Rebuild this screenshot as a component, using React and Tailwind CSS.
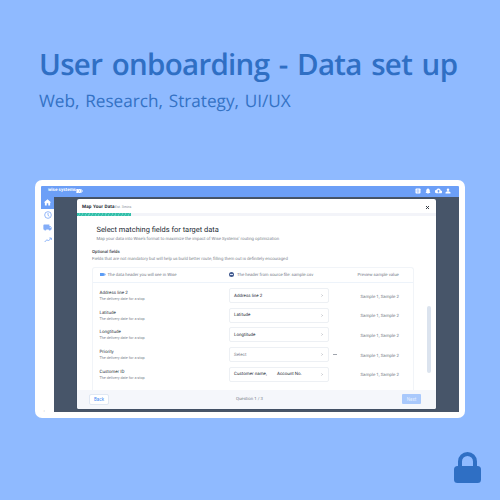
import React from "react";

const fields = [
  { name: "Address line 2", value: "Address line 2" },
  { name: "Latitude", value: "Latitude" },
  { name: "Longtitude", value: "Longtitude" },
  { name: "Priority", value: "Select", muted: true },
  { name: "Customer ID", value: "Customer name,", extra: "Account No." },
];

function TopBar() {
  return (
    <header className="flex h-[11px] shrink-0 items-center justify-between bg-[#6c9ff7] pl-[7px] pr-[8px] text-white">
      <div className="flex items-center">
        <span className="w-[27.500px] whitespace-nowrap pt-[1px] text-[4.600px] font-bold leading-none">wise systems</span>
        <svg className="h-[4px] w-[7px]" viewBox="0 0 14 8" fill="currentColor">
          <path d="M0 0h10l4 4-4 4H0l2-3H0V3h2z" />
          <path d="M5 1l3 3-3 3M9 1l3 3-3 3" fill="none" stroke="#6c9ff7" strokeWidth=".8" />
        </svg>
      </div>
      <div className="flex items-center gap-[4px]">
        <svg className="h-[6px] w-[6px]" viewBox="0 0 12 12">
          <rect x="1" y="1" width="10" height="10" rx="1.5" fill="currentColor" />
          <path d="M4 3.5h3.5v5H4zM4 6h3" fill="none" stroke="#6c9ff7" strokeWidth=".8" />
        </svg>
        <svg className="h-[6px] w-[6px]" viewBox="0 0 24 24" fill="currentColor">
          <path d="M12 1c1.4 0 2 1 2 2 3 1 5 3.500 5 7v6l3 4H2l3-4v-6c0-3.500 2-6 5-7 0-1 .6-2 2-2zM9 21h6c0 2-1.400 3-3 3s-3-1-3-3z" />
        </svg>
        <svg className="h-[6px] w-[7px]" viewBox="0 0 24 20" fill="currentColor">
          <path fillRule="evenodd" d="M19.500 8A7.500 7.500 0 0 0 5.200 6 6 6 0 0 0 6 18h13a5 5 0 0 0 .5-10zM14 11v4h-4v-4H7l5-5 5 5z" />
        </svg>
        <svg className="ml-[-1px] h-[6px] w-[6px]" viewBox="0 0 24 24" fill="currentColor">
          <circle cx="12" cy="7" r="5" />
          <path d="M2 22v-3c0-4 6-6 10-6s10 2 10 6v3z" />
        </svg>
      </div>
    </header>
  );
}

function SideBar() {
  return (
    <nav className="flex w-[13px] shrink-0 flex-col items-center bg-white text-[#83adf8]">
      <div className="flex h-[12px] w-full items-center justify-center bg-[#6c9ff7] text-white">
        <svg className="h-[9px] w-[9px]" viewBox="0 0 24 24" fill="currentColor">
          <path d="M10 20v-6h4v6h5v-8h3L12 3 2 12h3v8z" />
        </svg>
      </div>
      <svg className="mt-[2px] h-[8px] w-[8px]" viewBox="0 0 24 24" fill="none" stroke="currentColor" strokeWidth="2.600">
        <circle cx="12" cy="12" r="10" />
        <path d="M12 6v7l4 3" />
      </svg>
      <svg className="mt-[4px] h-[9px] w-[9px]" viewBox="0 0 24 24" fill="currentColor">
        <path d="M20 8h-3V4H3c-1.100 0-2 .9-2 2v11h2a3 3 0 0 0 6 0h6a3 3 0 0 0 6 0h2v-5zm-2 2h1.500l2 2.500H18z" />
      </svg>
      <svg className="mt-[4px] h-[8px] w-[8px]" viewBox="0 0 24 24" fill="none" stroke="currentColor" strokeWidth="2.800">
        <path d="M2 18l7-7 4 4 9-9M16 6h6v6" />
      </svg>
      <span className="mb-[-1px] mr-[7px] mt-auto text-[4px] leading-[4px] text-[#9ba0a8]">‹</span>
    </nav>
  );
}

function FieldRow({ field }) {
  return (
    <div className="flex h-[19.700px] items-start">
      <div className="w-[129.500px] pt-[3px]">
        <div className="text-[4.500px] leading-[6px] text-[#2c333d]">{field.name}</div>
        <div className="text-[3.750px] leading-[5px] text-[#7c828c]">The delivery date for a stop</div>
      </div>
      <div className="flex h-[15px] w-[100px] items-center rounded-[2px] border border-[#edf0f4] px-[4px] text-[4.500px] leading-none">
        <span className={field.muted ? "w-[32px] pt-[2.500px] text-[#7c838e]" : "w-[32px] whitespace-nowrap pt-[2.500px] text-[#252c36]"}>{field.value}</span>
        {field.extra && <span className="ml-[11px] pt-[2.500px] text-[#252c36]">{field.extra}</span>}
        <svg className="ml-auto mr-[1px] h-[3px] w-[2px]" viewBox="0 0 4 6" fill="none" stroke="#858b95">
          <path d="M1 1l2 2-2 2" />
        </svg>
      </div>
      <div className="flex h-[15px] w-[31.500px] items-center pl-[4px]">
        {field.muted && <i className="h-[1px] w-[3.500px] bg-[#a0a5ad]" />}
      </div>
      <span className="pt-[6.500px] text-[4.400px] leading-[6px] text-[#737a85]">Sample 1, Sample 2</span>
    </div>
  );
}

function Modal() {
  return (
    <section className="mt-[2px] ml-[23px] flex h-[210px] w-[359px] flex-col overflow-hidden rounded-[2px] bg-white shadow-[0_0_1px_#263447]">
      <div className="flex h-[14px] shrink-0 items-center justify-between pl-[5px] pr-[6.500px] pt-[4px]">
        <div className="flex items-center pt-[1px] leading-none">
          <span className="w-[33px] whitespace-nowrap text-[4.700px] font-bold tracking-[0.130px] text-[#252b34]">Map Your Data</span>
          <span className="text-[3.500px] text-[#858c96]">Est. 3mins</span>
        </div>
        <svg className="h-[5px] w-[5px]" viewBox="0 0 10 10" fill="none" stroke="#252b34" strokeWidth="1.800">
          <path d="M2 2l6 6M8 2L2 8" />
        </svg>
      </div>
      <div className="h-[3px] shrink-0 bg-[#f3f4f9]">
        <div className="h-full w-[54px] bg-[repeating-linear-gradient(115deg,#32bfa9_0_2px,#62cfbf_2px_3px)]" />
      </div>
      <div className="flex min-h-0 flex-1 flex-col overflow-hidden pl-[15px] pr-[5px]">
        <h2 className="ml-[4.500px] mt-[8px] text-[7.450px] leading-[12px] text-[#252c36]">Select matching fields for target data</h2>
        <p className="ml-[4.500px] mt-[1px] text-[4.320px] leading-[6px] text-[#7a818c]">
          Map your data into Wise’s format to maximize the impact of Wise Systems’ routing optimization
        </p>
        <p className="mt-[6px] text-[4.300px] font-medium leading-[7px] text-[#373e48]">Optional fields</p>
        <p className="mt-[1px] text-[4.300px] leading-[6px] text-[#7b828c]">
          Fields that are not mandatory but will help us build better route, filling them out is definitely encouraged
        </p>
        <div className="mt-[4px] flex min-h-0 flex-1">
          <div className="flex w-[322px] flex-col overflow-hidden rounded-t-[3px] border border-b-0 border-[#f1f4f8]">
            <div className="flex h-[15.500px] shrink-0 items-center border-b border-[#edf3fa] pl-[6.500px] text-[4.300px] leading-none text-[#727985]">
              <svg className="mr-[2px] h-[3px] w-[6px]" viewBox="0 0 12 6" fill="#5d9df5">
                <path d="M0 0h7l3 3-3 3H0zM8 0h1l3 3-3 3H8l3-3z" />
              </svg>
              <span className="w-[121.500px] pt-[2.500px]">The data header you will see in Wise</span>
              <svg className="mr-[3px] h-[5px] w-[5px]" viewBox="0 0 10 10">
                <circle cx="5" cy="5" r="5" fill="#435b8f" />
                <path d="M2 5h6" stroke="#d9e2f5" strokeWidth="2" />
              </svg>
              <span className="w-[120.500px] pt-[2.500px]">The header from source file: sample.csv</span>
              <span className="pt-[2.500px]">Preview sample value</span>
            </div>
            <div className="pl-[6.500px] pt-[5px]">
              {fields.map((field) => (
                <FieldRow key={field.name} field={field} />
              ))}
            </div>
          </div>
          <div className="ml-[13px] mt-[39px] h-[67px] w-[4px] rounded-full bg-[#dbe3ee]" />
        </div>
      </div>
      <footer className="flex h-[19px] shrink-0 items-center justify-between bg-[#f5f7fb] pl-[12px] pr-[15px] text-[4.500px] leading-none">
        <button className="h-[11px] w-[20px] rounded-[2px] border border-[#e0e8f3] bg-white pt-[2px] leading-none text-[#408bf4]">Back</button>
        <span className="mr-[12px] pt-[2.500px] text-[4.300px] text-[#777e89]">Question 1 / 3</span>
        <button className="h-[10.500px] w-[19px] rounded-[1px] bg-[#a9c9fc] pt-[2px] leading-none text-[#e6f0ff]">Next</button>
      </footer>
    </section>
  );
}

export default function App() {
  return (
    <main className="flex h-[500px] w-[500px] flex-col overflow-hidden bg-[#8fbaff] font-['Roboto',sans-serif] [text-rendering:geometricPrecision]">
      <h1 className="ml-[39px] mt-[43px] whitespace-nowrap font-['Open_Sans',sans-serif] text-[29.500px] font-[650] leading-[42px] tracking-[-0.700px] text-[#2f6fc4] [word-spacing:2.500px]">
        User onboarding - Data set up
      </h1>
      <p className="ml-[39px] mt-[5px] whitespace-nowrap font-['Open_Sans',sans-serif] text-[17.200px] leading-[24px] text-[#3472c5] [word-spacing:1.200px]">
        Web, Research, Strategy, UI/UX
      </p>
      <div className="ml-[35px] mt-[65.500px] h-[238.500px] w-[430px] shrink-0 rounded-[7px] bg-white p-[6px]">
        <div className="flex h-[226.500px] flex-col overflow-hidden rounded-t-[1px]">
          <TopBar />
          <div className="flex min-h-0 flex-1">
            <SideBar />
            <div className="min-w-0 flex-1 bg-[#475569]">
              <Modal />
            </div>
          </div>
        </div>
      </div>
      <svg className="ml-[454px] mt-[34px] h-[31px] w-[27px] shrink-0" viewBox="0 0 27 31">
        <path d="M6 15V9.500a7.500 7.500 0 0 1 15 0V15" fill="none" stroke="#2f6fc4" strokeWidth="4" />
        <rect y="14" width="27" height="17" rx="3.500" fill="#2f6fc4" />
      </svg>
    </main>
  );
}
